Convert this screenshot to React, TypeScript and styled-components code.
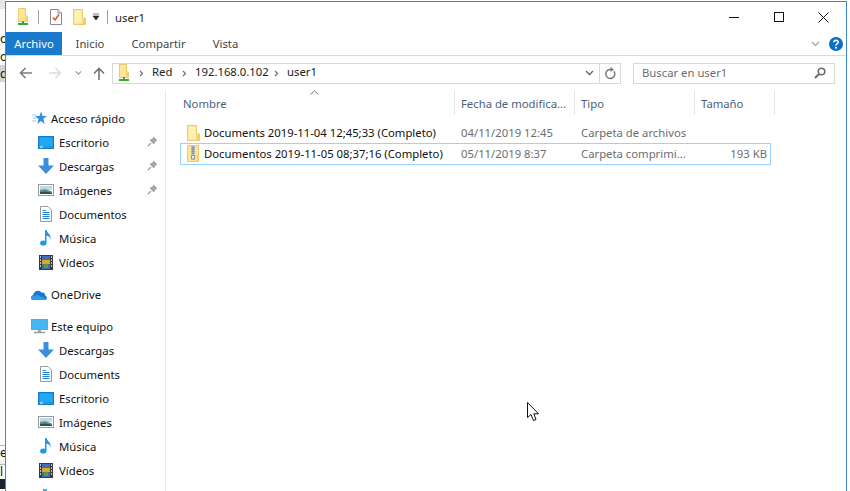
import { FC, ReactNode } from 'react'
import styled, { createGlobalStyle } from 'styled-components'

const UI_SIZE = '11.3px'

const GlobalStyle = createGlobalStyle`
	html, body {
		margin: 0;
		padding: 0;
		background: #fff;
		overflow: hidden;
	}
	body {
		font-family: 'Noto Sans', 'Open Sans', sans-serif;
		font-size: ${UI_SIZE};
		color: #000;
	}
`

const Screen = styled.div`
	position: relative;
	display: flex;
	width: 850px;
	height: 491px;
	overflow: hidden;
	background: #fff;
`

/* the window behind, only a sliver of it shows */
const Behind = styled.div`
	display: flex;
	flex-direction: column;
	width: 5px;
	height: 491px;
	flex-shrink: 0;
	overflow: hidden;
	background: #fbfbfb;
`

const BehindRow = styled.div<{ $h: number; $bg?: string }>`
	height: ${p => p.$h}px;
	flex-shrink: 0;
	background: ${p => p.$bg || 'transparent'};
	font-size: 12px;
	line-height: ${p => p.$h}px;
	white-space: nowrap;
	color: #111;
`

const Window = styled.div`
	display: flex;
	flex-direction: column;
	flex: 1;
	height: 491px;
	margin: 1px 3px 0 0;
	border: 1px solid #3a86cc;
	border-bottom: none;
	background: #fff;
	overflow: hidden;
`

const TitleBar = styled.div`
	display: flex;
	align-items: center;
	height: 30px;
	flex-shrink: 0;
	padding-left: 11px;
`

const QuickSep = styled.div<{ $l: number; $r: number }>`
	width: 1px;
	height: 14px;
	background: #a0a0a0;
	margin: 0 ${p => p.$r}px 0 ${p => p.$l}px;
`

const QuickGap = styled.div<{ $w: number }>`
	width: ${p => p.$w}px;
`

const TitleText = styled.div`
	flex: 1;
	color: #222;
`

const WinButtons = styled.div`
	display: flex;
	align-items: center;
`

const WinButton = styled.div`
	display: flex;
	justify-content: center;
	align-items: center;
	width: 45px;
	height: 30px;
`

const Tabs = styled.div`
	display: flex;
	align-items: stretch;
	height: 23px;
	flex-shrink: 0;
	border-bottom: 1px solid #dadada;
	box-sizing: content-box;
`

const Tab = styled.div<{ $active?: boolean; $w: number }>`
	display: flex;
	align-items: center;
	justify-content: center;
	width: ${p => p.$w}px;
	background: ${p => (p.$active ? '#1979ca' : 'transparent')};
	color: ${p => (p.$active ? '#fff' : '#444')};
`

const TabEnd = styled.div`
	display: flex;
	align-items: center;
	justify-content: flex-end;
	gap: 9px;
	flex: 1;
	padding-right: 3px;
`

const NavBar = styled.div`
	display: flex;
	align-items: center;
	height: 34px;
	flex-shrink: 0;
`

const NavButtons = styled.div`
	display: flex;
	align-items: center;
	width: 106px;
	padding-left: 4px;
	box-sizing: border-box;
`

const NavSlot = styled.div<{ $w: number }>`
	display: flex;
	justify-content: center;
	width: ${p => p.$w}px;
	flex-shrink: 0;
`

const AddressBox = styled.div`
	display: flex;
	align-items: center;
	width: 509px;
	height: 21px;
	box-sizing: border-box;
	border: 1px solid #d9d9d9;
	padding-left: 5px;
	color: #222;
`

const Crumb = styled.span<{ $w: number }>`
	width: ${p => p.$w}px;
	flex-shrink: 0;
	padding-bottom: 3px;
	white-space: nowrap;
`

const CrumbArrow = styled.div<{ $w: number }>`
	display: flex;
	justify-content: center;
	width: ${p => p.$w}px;
	flex-shrink: 0;
`

const AddressEnd = styled.div`
	display: flex;
	align-items: center;
	margin-left: auto;
	height: 100%;
`

const AddressChevron = styled.div`
	display: flex;
	justify-content: center;
	align-items: center;
	width: 20px;
	height: 100%;
	border-right: 1px solid #d9d9d9;
`

const AddressRefresh = styled.div`
	display: flex;
	justify-content: center;
	align-items: center;
	width: 20px;
`

const SearchBox = styled.div`
	display: flex;
	align-items: center;
	justify-content: space-between;
	width: 202px;
	height: 21px;
	box-sizing: border-box;
	margin-left: 12px;
	border: 1px solid #d9d9d9;
	padding: 0 8px 0 8px;
	color: #6d6d6d;
`

const SearchText = styled.span`
	padding-bottom: 2px;
`

const Body = styled.div`
	display: flex;
	flex: 1;
	min-height: 0;
`

const Sidebar = styled.div`
	width: 160px;
	flex-shrink: 0;
	padding-top: 16px;
	box-sizing: border-box;
	border-right: 1px solid #eaeaea;
	overflow: hidden;
`

const NavRow = styled.div<{ $top?: boolean; $gap?: boolean }>`
	position: relative;
	display: flex;
	align-items: center;
	height: 24px;
	gap: ${p => (p.$top ? 3 : 5)}px;
	padding-left: ${p => (p.$top ? 25 : 31)}px;
	margin-top: ${p => (p.$gap ? 8 : 0)}px;
	color: #111;
	white-space: nowrap;
`

const IconSlot = styled.div`
	display: flex;
	justify-content: center;
	align-items: center;
	width: 17px;
	height: 17px;
	flex-shrink: 0;
`

const PinSlot = styled.div`
	position: absolute;
	left: 141px;
	top: 6px;
	display: flex;
`

const Files = styled.div`
	flex: 1;
	min-width: 0;
	position: relative;
`

const SortMark = styled.div`
	position: absolute;
	left: 144px;
	top: 0;
	display: flex;
`

const HeaderRow = styled.div`
	display: flex;
	height: 24px;
	margin-top: 1px;
	margin-left: 11px;
`

const HeaderCell = styled.div<{ $w: number }>`
	display: flex;
	align-items: center;
	width: ${p => p.$w}px;
	box-sizing: border-box;
	padding-left: 6px;
	border-right: 1px solid #e5e5e5;
	color: #4c607a;
	white-space: nowrap;
	overflow: hidden;
`

const FileList = styled.div`
	margin: 7px 0 0 14px;
`

const FileRow = styled.div<{ $selected?: boolean }>`
	display: flex;
	align-items: center;
	width: 591px;
	height: ${p => (p.$selected ? 22 : 21)}px;
	box-sizing: border-box;
	padding-bottom: ${p => (p.$selected ? 1 : 0)}px;
	border: 1px solid ${p => (p.$selected ? '#99d1ff' : 'transparent')};
`

const FileName = styled.div`
	display: flex;
	align-items: center;
	gap: 4px;
	width: 280px;
	padding-left: 5px;
	box-sizing: border-box;
	white-space: nowrap;
	color: #111;
`

const FileCell = styled.div<{ $w: number; $right?: boolean }>`
	width: ${p => p.$w}px;
	color: #6d6d6d;
	white-space: nowrap;
	text-align: ${p => (p.$right ? 'right' : 'left')};
`

const Cursor = styled.div`
	position: absolute;
	left: 527px;
	top: 402px;
	display: flex;
`

const Icon: FC<{ w: number; h: number; box?: string; children: ReactNode }> = ({ w, h, box, children }) => (
	<svg width={w} height={h} viewBox={box || `0 0 ${w} ${h}`} style={{ display: 'block', flexShrink: 0 }}>
		{children}
	</svg>
)

const FolderIcon = () => (
	<Icon w={14} h={16}>
		<path d='M1.5 .5H10.5V9H13.5V15.5H1.5Z' fill='#fde69a' stroke='#eccb6c' />
		<path d='M3 2H9.5V14H3Z' fill='#fff0b8' />
		<path d='M10.5 9.5H13V15H10.5Z' fill='#f6d061' />
	</Icon>
)

const ZipIcon = () => (
	<Icon w={14} h={17}>
		<path d='M1.5 .5H12.5V16.5H1.5Z' fill='#fde69a' stroke='#eccb6c' />
		<path d='M10.5 10H13V16H10.5Z' fill='#f6d061' />
		<path d='M5 1H9V10.5L8.5 15H5.5L5 10.5Z' fill='#c9c9c9' />
		<path d='M7 1V9M5.5 2.5H8.5M5.5 4.5H8.5M5.5 6.5H8.5M5.5 8.5H8.5' stroke='#8c8c8c' strokeWidth='1' />
		<path d='M5.5 10.5H8.5V14H5.5Z' fill='#f2f2f2' stroke='#8c8c8c' />
	</Icon>
)

const NetFolderIcon = () => (
	<Icon w={12} h={18}>
		<path d='M1.5 .5H8.5V8H10.5V13.5H1.5Z' fill='#fde69a' stroke='#eccb6c' />
		<path d='M8 9H10V13H8Z' fill='#f6d061' />
		<path d='M5 13H7V15H5Z' fill='#39a82b' />
		<path d='M1 15H11V17H1Z' fill='#39a82b' />
	</Icon>
)

const ChecklistIcon = () => (
	<Icon w={12} h={16}>
		<path d='M.5 .5H8L11.5 4V15.5H.5Z' fill='#fff' stroke='#8a8a8a' />
		<path d='M8 .5V4H11.5' fill='#eee' stroke='#8a8a8a' />
		<path d='M3 8.5L5 11L9 5.5' fill='none' stroke='#e0532a' strokeWidth='1.5' />
	</Icon>
)

const Chevron = ({ color = '#7a7a7a', size = 9 }: { color?: string; size?: number }) => (
	<Icon w={size} h={6} box='0 0 9 6'>
		<path d='M1 1L4.5 4.5L8 1' fill='none' stroke={color} strokeWidth='1.4' />
	</Icon>
)

const SmallArrow = () => (
	<Icon w={5} h={7}>
		<path d='M1 1L3.5 3.5L1 6' fill='none' stroke='#707070' strokeWidth='1.2' />
	</Icon>
)

const ArrowLeft = ({ color }: { color: string }) => (
	<Icon w={13} h={12}>
		<path d='M13 6H2M6.5 1L1.5 6L6.5 11' fill='none' stroke={color} strokeWidth='1.6' />
	</Icon>
)

const ArrowRight = ({ color }: { color: string }) => (
	<Icon w={13} h={12}>
		<path d='M0 6H11M6.5 1L11.5 6L6.5 11' fill='none' stroke={color} strokeWidth='1.6' />
	</Icon>
)

const ArrowUp = () => (
	<Icon w={12} h={13}>
		<path d='M6 13V2M1 6.5L6 1.5L11 6.5' fill='none' stroke='#737373' strokeWidth='1.6' />
	</Icon>
)

const StarIcon = () => (
	<Icon w={15} h={14}>
		<path d='M9 .5L10.5 5H15L11.3 7.8L12.7 13L9 10L5.3 13L6.6 8L3 5H7.5Z' fill='#2f8fdc' />
		<path d='M0 4H4M1 7H5M0 10H4' stroke='#9ccdf2' strokeWidth='1' />
	</Icon>
)

const DesktopIcon = () => (
	<Icon w={16} h={13}>
		<rect x='.5' y='.5' width='15' height='12' fill='#1e9ae8' stroke='#0c7ecb' />
		<path d='M2 2H14V10H2Z' fill='#22a8f5' />
		<path d='M2 11H5' stroke='#fff' strokeWidth='1' />
	</Icon>
)

const DownloadIcon = () => (
	<Icon w={16} h={16}>
		<path d='M5.5 0H10.5V7.5H16L8 16L0 7.5H5.5Z' fill='#3a8fdd' />
	</Icon>
)

const PicturesIcon = () => (
	<Icon w={16} h={12}>
		<rect x='.5' y='.5' width='15' height='11' fill='#fff' stroke='#999' />
		<path d='M2 2H14V6H2Z' fill='#b5dbee' />
		<path d='M2 6L7 5L14 7.5V10H2Z' fill='#6d8f7a' />
		<path d='M2 8L8 7.5L14 9V10H2Z' fill='#33504a' />
	</Icon>
)

const DocIcon = () => (
	<Icon w={12} h={16}>
		<path d='M.5 .5H8L11.5 4V15.5H.5Z' fill='#fff' stroke='#9a9a9a' />
		<path d='M2.5 6.5H9.5M2.5 8.5H9.5M2.5 10.5H9.5M2.5 12.5H9.5M2.5 4.5H6' stroke='#1f86d8' strokeWidth='1' />
	</Icon>
)

const MusicIcon = () => (
	<Icon w={12} h={16}>
		<ellipse cx='3.3' cy='13' rx='3.2' ry='2.6' fill='#1f97e6' />
		<path d='M5 13V0H6.5C7 3 11.5 4.5 10.5 9.5C10 6.5 8 6 6.5 5.5V13Z' fill='#1f97e6' />
	</Icon>
)

const VideoIcon = () => (
	<Icon w={14} h={15}>
		<rect width='14' height='15' fill='#3a3a3a' />
		<path d='M3 1H11V14H3Z' fill='#3f6fb0' />
		<path d='M3 5H11V9H3Z' fill='#d9a82a' />
		<path d='M5 9H9V13H5Z' fill='#5e9a3d' />
		<path d='M1 2H2M1 5H2M1 8H2M1 11H2M12 2H13M12 5H13M12 8H13M12 11H13' stroke='#eee' strokeWidth='1.4' />
	</Icon>
)

const CloudIcon = () => (
	<Icon w={17} h={11} box='1 0 17 11'>
		<path d='M3.5 11C.5 11 0 7 3 6.3C3.5 2 9 0 11.5 3.5C14.5 3 15.5 5.5 15 6.5C17.5 7 17.5 11 15 11Z' fill='#1b78cf' />
		<path d='M3.5 11C1.5 11 .5 9.5 1 8L7 6L15.5 9.5C15.5 10.5 15 11 14.5 11Z' fill='#2f9be8' />
	</Icon>
)

const MonitorIcon = () => (
	<Icon w={17} h={15}>
		<rect x='.5' y='.5' width='16' height='10' fill='#45b6f0' stroke='#8a9aa5' />
		<path d='M7 11H10V13H7Z' fill='#9aa' />
		<path d='M3 13.5H14' stroke='#8a9aa5' strokeWidth='1.4' />
	</Icon>
)

const DriveIcon = () => (
	<Icon w={14} h={14}>
		<path d='M4 2H8V5H4Z' fill='#3fb0ee' />
		<rect x='1' y='6' width='12' height='7' fill='#c8c8c8' />
	</Icon>
)

const PinIcon = () => (
	<Icon w={11} h={11}>
		<path d='M6.5 .5L10.5 4.5L8.5 5.5L7 8.5L2.5 4L5.5 2.5Z' fill='#a3a3a3' />
		<path d='M4 7L.8 10.2' stroke='#a3a3a3' strokeWidth='1.4' />
	</Icon>
)

const navRows = {
	quick: [
		{ name: 'Escritorio', icon: <DesktopIcon />, pin: true },
		{ name: 'Descargas', icon: <DownloadIcon />, pin: true },
		{ name: 'Imágenes', icon: <PicturesIcon />, pin: true },
		{ name: 'Documentos', icon: <DocIcon /> },
		{ name: 'Música', icon: <MusicIcon /> },
		{ name: 'Vídeos', icon: <VideoIcon /> },
	],
	pc: [
		{ name: 'Descargas', icon: <DownloadIcon /> },
		{ name: 'Documents', icon: <DocIcon /> },
		{ name: 'Escritorio', icon: <DesktopIcon /> },
		{ name: 'Imágenes', icon: <PicturesIcon /> },
		{ name: 'Música', icon: <MusicIcon /> },
		{ name: 'Vídeos', icon: <VideoIcon /> },
	],
}

const SideItem: FC<{ name: string; icon: ReactNode; pin?: boolean }> = ({ name, icon, pin }) => (
	<NavRow>
		<IconSlot>{icon}</IconSlot>
		{name}
		{pin && (
			<PinSlot>
				<PinIcon />
			</PinSlot>
		)}
	</NavRow>
)

const App: FC = () => (
	<Screen>
		<GlobalStyle />
		<Behind>
			<BehindRow $h={9} $bg='#e6e6e6' />
			<BehindRow $h={23} />
			<BehindRow $h={13}>o</BehindRow>
			<BehindRow $h={5} />
			<BehindRow $h={13}>o</BehindRow>
			<BehindRow $h={2} />
			<BehindRow $h={17} $bg='#d4d4d4'>
				d
			</BehindRow>
			<BehindRow $h={363} />
			<BehindRow $h={1} $bg='#b8b8b8' />
			<BehindRow $h={14}>e</BehindRow>
			<BehindRow $h={4} $bg='#f0f0f0' />
			<BehindRow $h={1} $bg='#b8b8b8' />
			<BehindRow $h={14}>l</BehindRow>
			<BehindRow $h={10} $bg='#1a2430' />
		</Behind>
		<Window>
			<TitleBar>
				<NetFolderIcon />
				<QuickSep $l={9} $r={11} />
				<ChecklistIcon />
				<QuickGap $w={10} />
				<FolderIcon />
				<QuickGap $w={6} />
				<Icon w={8} h={8}>
					<path d='M1 1H7M1 3H7L4 7Z' fill='#222' stroke='#222' strokeWidth='.6' />
				</Icon>
				<QuickSep $l={7} $r={7} />
				<TitleText>user1</TitleText>
				<WinButtons>
					<WinButton>
						<Icon w={10} h={1}>
							<path d='M0 .5H10' stroke='#111' />
						</Icon>
					</WinButton>
					<WinButton>
						<Icon w={10} h={10}>
							<rect x='.5' y='.5' width='9' height='9' fill='none' stroke='#111' />
						</Icon>
					</WinButton>
					<WinButton>
						<Icon w={11} h={11}>
							<path d='M.5 .5L10.5 10.5M10.5 .5L.5 10.5' stroke='#111' />
						</Icon>
					</WinButton>
				</WinButtons>
			</TitleBar>
			<Tabs>
				<Tab $active $w={56}>
					Archivo
				</Tab>
				<Tab $w={56}>Inicio</Tab>
				<Tab $w={81}>Compartir</Tab>
				<Tab $w={53}>Vista</Tab>
				<TabEnd>
					<Chevron color='#aaa' />
					<Icon w={14} h={14}>
						<circle cx='7' cy='7' r='7' fill='#0b6fc9' />
						<path d='M4.8 5.2C5 2.8 9.4 2.8 9.3 5.2C9.2 6.8 7 6.6 7 8.6' fill='none' stroke='#fff' strokeWidth='1.6' />
						<rect x='6.1' y='9.8' width='1.8' height='1.8' fill='#fff' />
					</Icon>
				</TabEnd>
			</Tabs>
			<NavBar>
				<NavButtons>
					<NavSlot $w={30}>
						<ArrowLeft color='#7d7d7d' />
					</NavSlot>
					<NavSlot $w={30}>
						<ArrowRight color='#dcdcdc' />
					</NavSlot>
					<NavSlot $w={16}>
						<Chevron color='#9a9a9a' size={7} />
					</NavSlot>
					<NavSlot $w={26}>
						<ArrowUp />
					</NavSlot>
				</NavButtons>
				<AddressBox>
					<NetFolderIcon />
					<CrumbArrow $w={22}>
						<SmallArrow />
					</CrumbArrow>
					<Crumb $w={21}>Red</Crumb>
					<CrumbArrow $w={22}>
						<SmallArrow />
					</CrumbArrow>
					<Crumb $w={71}>192.168.0.102</Crumb>
					<CrumbArrow $w={21}>
						<SmallArrow />
					</CrumbArrow>
					<Crumb $w={30}>user1</Crumb>
					<AddressEnd>
						<AddressChevron>
							<Chevron color='#666' />
						</AddressChevron>
						<AddressRefresh>
							<Icon w={12} h={13}>
								<path d='M9.8 4.2A4.5 4.5 0 1 1 6 2.5H8' fill='none' stroke='#7a7a7a' strokeWidth='1.5' />
								<path d='M6.5 0L10 2.5L6.5 5Z' fill='#7a7a7a' />
							</Icon>
						</AddressRefresh>
					</AddressEnd>
				</AddressBox>
				<SearchBox>
					<SearchText>Buscar en user1</SearchText>
					<Icon w={12} h={12}>
						<circle cx='7.5' cy='4.5' r='3.3' fill='none' stroke='#6d6d6d' strokeWidth='1.6' />
						<path d='M5 7L1 11' stroke='#6d6d6d' strokeWidth='2' />
					</Icon>
				</SearchBox>
			</NavBar>
			<Body>
				<Sidebar>
					<NavRow $top>
						<IconSlot>
							<StarIcon />
						</IconSlot>
						Acceso rápido
					</NavRow>
					{navRows.quick.map(row => (
						<SideItem key={row.name} {...row} />
					))}
					<NavRow $top $gap>
						<IconSlot>
							<CloudIcon />
						</IconSlot>
						OneDrive
					</NavRow>
					<NavRow $top $gap>
						<IconSlot>
							<MonitorIcon />
						</IconSlot>
						Este equipo
					</NavRow>
					{navRows.pc.map(row => (
						<SideItem key={row.name} {...row} />
					))}
					<SideItem name='Disco local (C:)' icon={<DriveIcon />} />
				</Sidebar>
				<Files>
					<SortMark>
						<Icon w={9} h={5}>
							<path d='M.5 4.5L4.5 .8L8.5 4.5' fill='none' stroke='#777' />
						</Icon>
					</SortMark>
					<HeaderRow>
						<HeaderCell $w={278}>Nombre</HeaderCell>
						<HeaderCell $w={120}>Fecha de modifica...</HeaderCell>
						<HeaderCell $w={120}>Tipo</HeaderCell>
						<HeaderCell $w={80}>Tamaño</HeaderCell>
					</HeaderRow>
					<FileList>
						<FileRow>
							<FileName>
								<FolderIcon />
								Documents 2019-11-04 12;45;33 (Completo)
							</FileName>
							<FileCell $w={120}>04/11/2019 12:45</FileCell>
							<FileCell $w={120}>Carpeta de archivos</FileCell>
						</FileRow>
						<FileRow $selected>
							<FileName>
								<ZipIcon />
								Documentos 2019-11-05 08;37;16 (Completo)
							</FileName>
							<FileCell $w={120}>05/11/2019 8:37</FileCell>
							<FileCell $w={120}>Carpeta comprimi...</FileCell>
							<FileCell $w={66} $right>
								193 KB
							</FileCell>
						</FileRow>
					</FileList>
				</Files>
			</Body>
		</Window>
		<Cursor>
			<Icon w={13} h={19}>
				<path d='M.5 .5V15.5L4 12.5L6.5 18.5L9 17.5L6.8 11.8H11.5Z' fill='#fff' stroke='#111' />
			</Icon>
		</Cursor>
	</Screen>
)

export default App
